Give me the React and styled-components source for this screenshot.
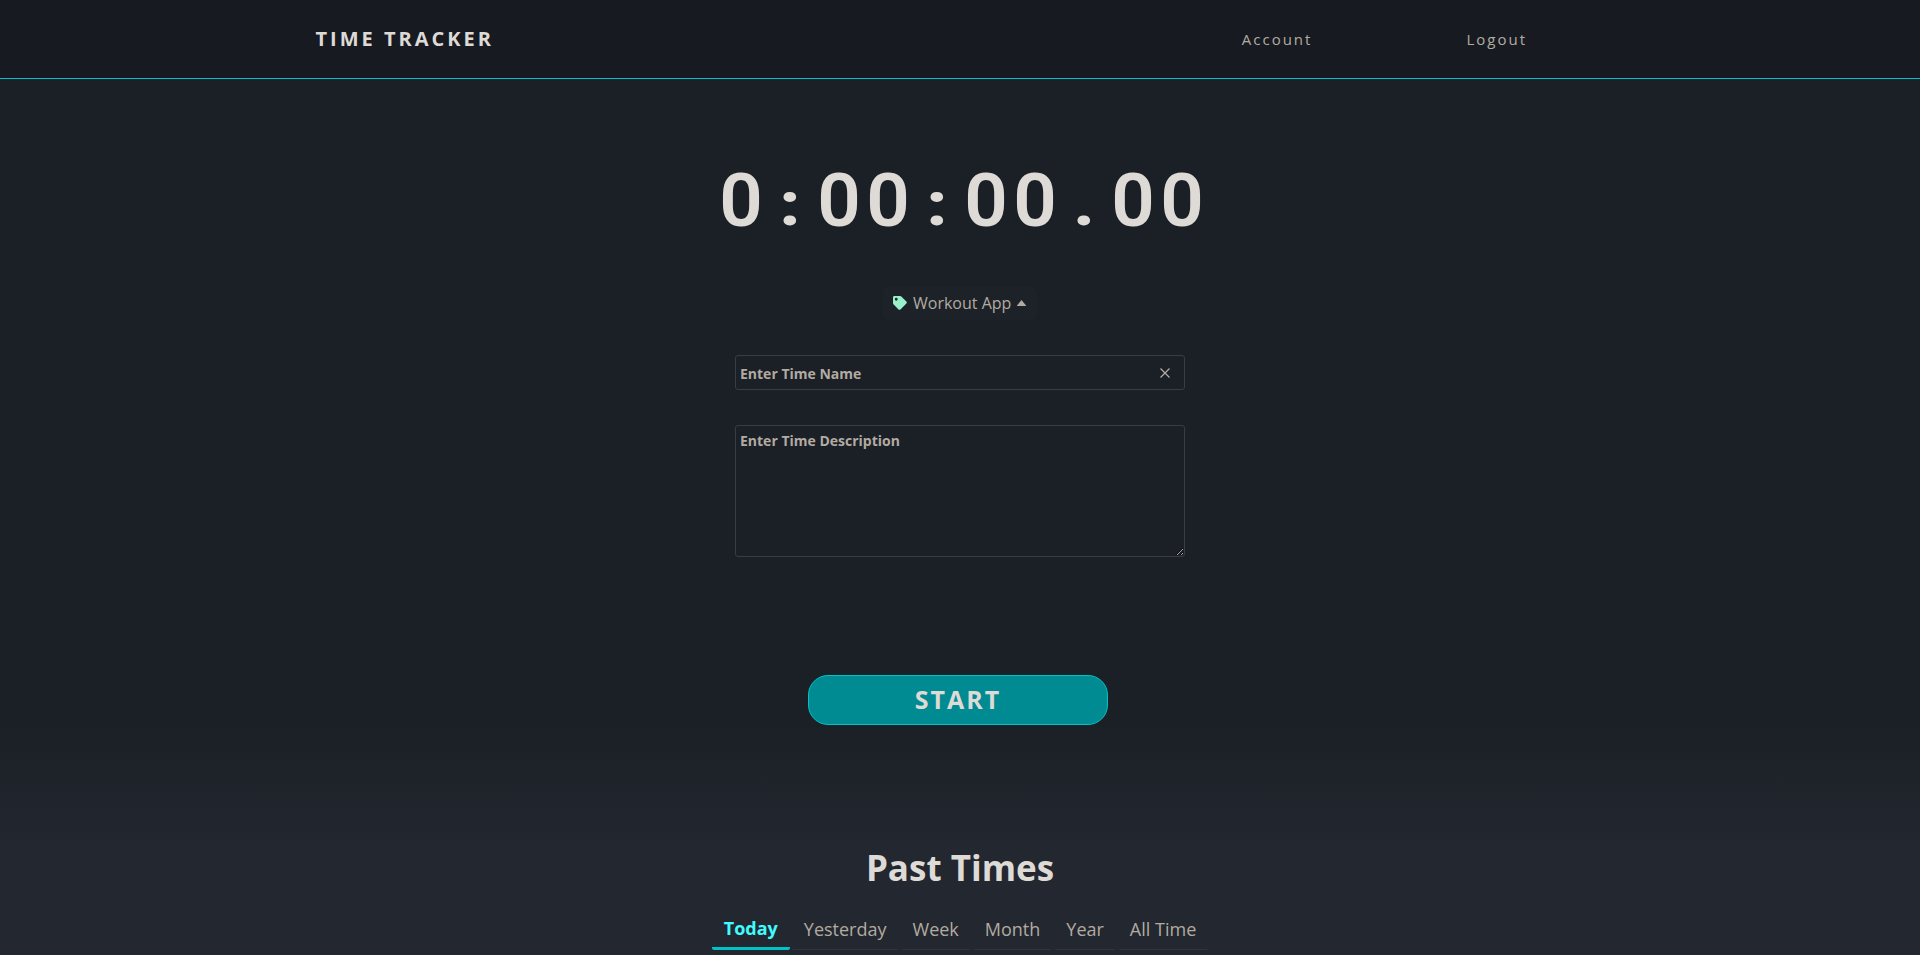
import React from "react";
import styled, { createGlobalStyle } from "styled-components";

const GlobalStyle = createGlobalStyle`
  * { box-sizing: border-box; }
  html, body { margin: 0; height: 955px; overflow: hidden; }
  body {
    font-family: "Open Sans", sans-serif;
    color: #dedad6;
    background: #1b1f26;
  }
  button, input, textarea { font-family: inherit; margin: 0; }
`;

const Page = styled.div`
  height: 955px;
  overflow: hidden;
  display: flex;
  flex-direction: column;
  background: linear-gradient(#1b1f26 0, #1b1f26 725px, #23272f 850px);
`;

const Header = styled.header`
  flex: none;
  height: 79px;
  padding: 0 393px 0 315.5px;
  display: flex;
  align-items: center;
  justify-content: space-between;
  background: #171b21;
  border-bottom: 1px solid #00c2c7;
`;

const Logo = styled.div`
  font-size: 20px;
  line-height: 28px;
  font-weight: 700;
  letter-spacing: 3px;
`;

const Nav = styled.nav`
  display: flex;
  gap: 154px;
`;

const NavLink = styled.a`
  font-size: 15px;
  line-height: 22px;
  letter-spacing: 2px;
  color: #b2aba1;
`;

const Tracker = styled.main`
  display: flex;
  flex-direction: column;
  align-items: center;
`;

const Clock = styled.div`
  display: flex;
  align-items: baseline;
  height: 98px;
  margin: 72px 0 0 1px;
  font-family: Roboto, sans-serif;
  font-size: 74px;
  font-weight: 600;
  line-height: 99px;
`;

const ClockCell = styled.span`
  width: 49px;
  display: flex;
  justify-content: center;
  transform: translateX(0.5px) scaleX(1.03);
`;

const Separator = styled(ClockCell)`
  font-size: 62px;
  font-weight: 900;
  transform: translate(0.5px, -1.5px) scaleX(1.12);
`;

const ProjectButton = styled.button`
  display: flex;
  align-items: center;
  width: 154px;
  height: 33px;
  margin-top: 38px;
  padding: 0 10px 1px;
  border: 0;
  border-radius: 5px;
  background: #1d2228;
  color: #b2aba1;
  font-size: 16px;
  line-height: 22px;
`;

const TagIcon = styled.svg`
  flex: none;
  width: 14px;
  height: 14px;
  margin-right: 6px;
  fill: #98f0cb;
`;

const Caret = styled.svg`
  flex: none;
  width: 9px;
  height: 6px;
  margin: 0 0 0 6px;
  fill: #b2aba1;
`;

const NameField = styled.div`
  width: 450px;
  height: 35px;
  margin-top: 35px;
  padding: 2px 14px 0 4px;
  display: flex;
  align-items: center;
  border: 1px solid #3a3c3e;
  border-radius: 3px;
`;

const NameInput = styled.input`
  flex: 1;
  padding: 0;
  border: 0;
  outline: 0;
  background: none;
  font-size: 14px;
  font-weight: 700;
  line-height: 18px;
  &::placeholder { color: #b2aba1; opacity: 1; }
`;

const Clear = styled.svg`
  width: 10px;
  height: 10px;
  margin-top: -2px;
  stroke: #b2aba1;
  stroke-width: 1.3;
`;

const Description = styled.textarea`
  width: 450px;
  height: 132px;
  margin-top: 35px;
  padding: 6px 4px;
  border: 1px solid #3a3c3e;
  border-radius: 3px;
  outline: 0;
  background: none;
  font-size: 14px;
  font-weight: 700;
  line-height: 18px;
  resize: both;
  &::placeholder { color: #b2aba1; opacity: 1; }
`;

const StartButton = styled.button`
  width: 300px;
  height: 50px;
  margin: 118px 4px 0 0;
  padding: 0 0 2px;
  border: 1px solid #00c2c7;
  border-radius: 20px;
  background: #008b92;
  color: #dedad6;
  font-size: 25px;
  font-weight: 700;
  line-height: 34px;
  letter-spacing: 2px;
`;

const Heading = styled.h2`
  margin: 119px 0 0;
  font-size: 35px;
  font-weight: 700;
  line-height: 48px;
`;

const Tabs = styled.div`
  display: flex;
  gap: 2px;
  margin-top: 21px;
`;

const Tab = styled.button`
  height: 37px;
  padding: 0 12px 3px;
  border: 0;
  border-bottom: ${(p) => (p.$active ? "3px solid #00c2c7" : "1px solid #30343c")};
  border-radius: 2px;
  background: none;
  color: ${(p) => (p.$active ? "#3ffcff" : "#b2aba1")};
  font-size: 18px;
  font-weight: ${(p) => (p.$active ? 700 : 400)};
  line-height: 25px;
`;

const tabs = ["Today", "Yesterday", "Week", "Month", "Year", "All Time"];

export default function App() {
  return (
    <Page>
      <GlobalStyle />
      <Header>
        <Logo>TIME TRACKER</Logo>
        <Nav>
          <NavLink>Account</NavLink>
          <NavLink>Logout</NavLink>
        </Nav>
      </Header>
      <Tracker>
        <Clock>
          {"0:00:00.00".split("").map((char, i) => {
            const Cell = char === ":" || char === "." ? Separator : ClockCell;
            return <Cell key={i}>{char}</Cell>;
          })}
        </Clock>
        <ProjectButton>
          <TagIcon viewBox="0 0 512 512">
            <path d="M0 252V48C0 21 21 0 48 0h204a48 48 0 0 1 34 14l176 176c19 19 19 49 0 68L258 462c-19 19-49 19-68 0L14 286A48 48 0 0 1 0 252zM112 64a48 48 0 1 0 0 96 48 48 0 0 0 0-96z" transform="scale(1.06)" />
          </TagIcon>
          Workout App
          <Caret viewBox="0 0 9 6">
            <path d="M0 6V5.5L4.5 0 9 5.5V6z" />
          </Caret>
        </ProjectButton>
        <NameField>
          <NameInput placeholder="Enter Time Name" />
          <Clear viewBox="0 0 10 10">
            <path d="M.5.5l9 9m0-9l-9 9" />
          </Clear>
        </NameField>
        <Description placeholder="Enter Time Description" />
        <StartButton>START</StartButton>
        <Heading>Past Times</Heading>
        <Tabs>
          {tabs.map((label, i) => (
            <Tab key={label} $active={i === 0}>
              {label}
            </Tab>
          ))}
        </Tabs>
      </Tracker>
    </Page>
  );
}
